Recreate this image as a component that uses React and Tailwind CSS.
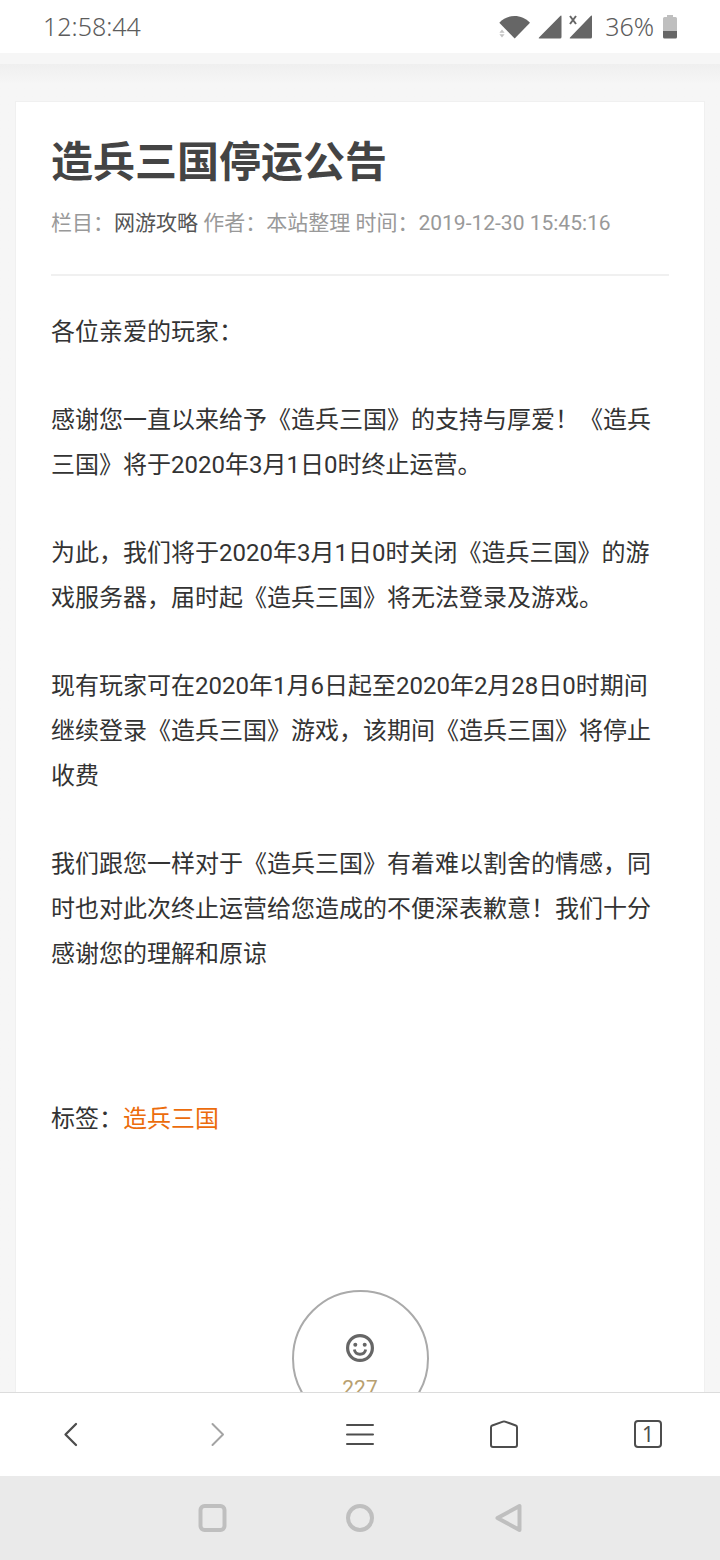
const paragraphs = [
  "各位亲爱的玩家：",
  "感谢您一直以来给予《造兵三国》的支持与厚爱！《造兵三国》将于2020年3月1日0时终止运营。",
  "为此，我们将于2020年3月1日0时关闭《造兵三国》的游戏服务器，届时起《造兵三国》将无法登录及游戏。",
  "现有玩家可在2020年1月6日起至2020年2月28日0时期间继续登录《造兵三国》游戏，该期间《造兵三国》将停止收费",
  "我们跟您一样对于《造兵三国》有着难以割舍的情感，同时也对此次终止运营给您造成的不便深表歉意！我们十分感谢您的理解和原谅",
];

function StatusBar() {
  return (
    <header className="flex h-[53px] shrink-0 items-center justify-between bg-white pr-[42px] pl-[43px] font-['Noto_Sans',sans-serif] text-[25px] font-light text-[#5c5c5c]">
      <time>12:58:44</time>
      <div className="flex items-center">
        <svg className="h-7 w-[100px] text-[#666666]" viewBox="0 0 100 28" fill="currentColor" aria-hidden="true">
          {/* wifi */}
          <path d="M6.3 9.800C14.500 .7 28.800 .7 37 9.800L21.700 25.500Z" />
          <path d="M9 16.500l2.600 3.200H6.400zM9 24.500l2.600-3.200H6.400z" fill="#c4c4c4" />
          {/* signal 1 and 2 */}
          <path d="M67.500 2.800q1-.8 1 .5V24q0 1.500-1.500 1.500H46.500q-1.500 0-.5-1z" />
          <path d="M98 2.800q1-.8 1 .5V24q0 1.500-1.500 1.500H77.500q-1.500 0-.5-1z" />
          <path d="M77 3l6 8M83 3l-6 8" stroke="currentColor" strokeWidth="2" />
        </svg>
        <span className="ml-3">36%</span>
        <svg className="ml-2 h-6 w-4" viewBox="0 0 16 24" aria-hidden="true">
          <path d="M5 0h6v2h2.500Q15 2 15 3.500V16H1V3.500Q1 2 2.500 2H5z" fill="#bfbfbf" />
          <path d="M1 16h14v6q0 1.500-1.500 1.500h-11Q1 23.500 1 22z" fill="#666666" />
        </svg>
      </div>
    </header>
  );
}

function Article() {
  return (
    <article className="mx-[15px] mt-[37px] border border-[#f0f0f0] bg-white px-[35px] pt-[31px]">
      <h1 className="text-[42px] leading-[60px] font-bold text-[#444444]">造兵三国停运公告</h1>
      <p className="mt-[14px] border-b-2 border-[#f0f0f0] pb-[35px] text-[21px] leading-8 text-[#999999]">
        栏目：
        <a href="#strategy" className="text-[#555555]">
          网游攻略
        </a>{" "}
        作者：本站整理 时间：2019-12-30 15:45:16
      </p>
      <div className="mt-[34px] space-y-[43px] text-2xl leading-[45px] text-[#333333]">
        {paragraphs.map((text) => (
          <p key={text}>{text}</p>
        ))}
      </div>
      <p className="mt-[120px] text-2xl leading-[45px] text-[#333333]">
        标签：
        <a href="#tag" className="text-[#ec6c0c]">
          造兵三国
        </a>
      </p>
      <button
        type="button"
        className="mx-auto mt-[148px] flex size-[137px] flex-col items-center rounded-full border-2 border-[#aaaaaa] pt-[42px] text-[21px] leading-6 text-[#b8a070]"
      >
        <svg className="size-7 text-[#666666]" viewBox="0 0 28 28" fill="none" stroke="currentColor" aria-hidden="true">
          <circle cx="14" cy="14" r="12.400" strokeWidth="3.200" />
          <circle cx="9.300" cy="10.800" r="2" fill="currentColor" stroke="none" />
          <circle cx="18.700" cy="10.800" r="2" fill="currentColor" stroke="none" />
          <path d="M8.300 15.500a5.800 5.800 0 0 0 11.400 0" strokeWidth="2.800" />
        </svg>
        <span className="mt-[14px]">227</span>
      </button>
    </article>
  );
}

function BrowserBar() {
  const button = "flex h-full items-center justify-center";
  const icon = "size-8";
  const stroke = {
    viewBox: "0 0 32 32",
    fill: "none",
    stroke: "currentColor",
    strokeWidth: 2,
    strokeLinecap: "round",
    strokeLinejoin: "round",
  };

  return (
    <nav className="grid h-[84px] shrink-0 grid-cols-5 border-t border-[#dcdcdc] bg-white pb-[2px] text-[#4d4d4d]">
      <button type="button" aria-label="后退" className={button}>
        <svg className={icon} {...stroke}>
          <path d="M20 6L9.500 16.500L20 27" strokeWidth="2.300" />
        </svg>
      </button>
      <button type="button" aria-label="前进" className={`${button} text-[#a3a3a3]`}>
        <svg className={icon} {...stroke}>
          <path d="M12.500 6L23 16.500L12.500 27" />
        </svg>
      </button>
      <button type="button" aria-label="菜单" className={button}>
        <svg className={icon} {...stroke}>
          <path d="M3 7h26M3 16.500h26M3 26h26" />
        </svg>
      </button>
      <button type="button" aria-label="主页" className={button}>
        <svg className={icon} {...stroke}>
          <path d="M3 9.300Q3 8 4.200 7.500L15 3.600Q16 3.300 17 3.600L27.800 7.500Q29 8 29 9.300V27Q29 29 27 29H5Q3 29 3 27Z" />
        </svg>
      </button>
      <button type="button" aria-label="标签页" className={button}>
        <span className="flex size-7 items-center justify-center rounded-sm border-2 border-[#4d4d4d] font-['Noto_Sans',sans-serif] text-[21px] leading-6">
          1
        </span>
      </button>
    </nav>
  );
}

function SystemBar() {
  const svg = {
    className: "size-8",
    viewBox: "0 0 32 32",
    fill: "none",
    stroke: "currentColor",
    strokeWidth: 4,
    strokeLinejoin: "round",
  };

  return (
    <nav className="flex h-[84px] shrink-0 items-center justify-center gap-[116px] bg-[#eaeaea] text-[#bfbfbf]">
      <button type="button" aria-label="最近任务">
        <svg {...svg}>
          <rect x="4.500" y="4" width="24" height="24" rx="4" />
        </svg>
      </button>
      <button type="button" aria-label="主屏幕">
        <svg {...svg}>
          <circle cx="16" cy="16" r="12" />
        </svg>
      </button>
      <button type="button" aria-label="返回">
        <svg {...svg}>
          <path d="M27.500 4V28L5.500 16Z" />
        </svg>
      </button>
    </nav>
  );
}

function App() {
  return (
    <div className="flex h-screen flex-col bg-[#f6f6f6] font-[Roboto,'Noto_Sans_CJK_SC',sans-serif]">
      <StatusBar />
      <div className="h-[11px] shrink-0 bg-[#f6f6f6]" />
      <main className="min-h-0 flex-1 overflow-hidden bg-linear-to-b from-[#efefef] to-[#f6f6f6] to-[20px]">
        <Article />
      </main>
      <BrowserBar />
      <SystemBar />
    </div>
  );
}

export default App;
